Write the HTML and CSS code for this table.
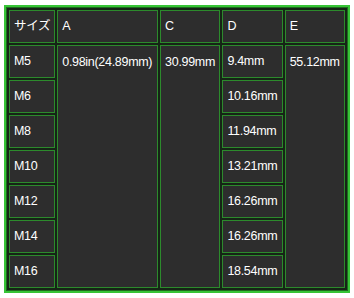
FILE: index.html
```html
<!DOCTYPE html>
<html lang="ja">
<head>
<meta charset="utf-8">
<title>サイズ表</title>
<link rel="stylesheet" href="styles.css">
</head>
<body>
<table class="spec">
  <tr>
    <td class="c1">サイズ</td>
    <td class="c2">A</td>
    <td class="c3">C</td>
    <td class="c4">D</td>
    <td class="c5">E</td>
  </tr>
  <tr>
    <td>M5</td>
    <td class="span" rowspan="7">0.98in(24.89mm)</td>
    <td class="span" rowspan="7">30.99mm</td>
    <td>9.4mm</td>
    <td class="span" rowspan="7">55.12mm</td>
  </tr>
  <tr><td>M6</td><td>10.16mm</td></tr>
  <tr><td>M8</td><td>11.94mm</td></tr>
  <tr><td>M10</td><td>13.21mm</td></tr>
  <tr><td>M12</td><td>16.26mm</td></tr>
  <tr><td>M14</td><td>16.26mm</td></tr>
  <tr><td>M16</td><td>18.54mm</td></tr>
</table>
</body>
</html>
```
FILE: styles.css
```css
html, body {
  background: #ffffff;
}
body {
  margin: 5px 4px 0;
  font-family: "Liberation Sans", "Noto Sans CJK JP", sans-serif;
}
.spec {
  border-collapse: separate;
  border-spacing: 2px;
  table-layout: fixed;
  border: 2px solid #36c436;
  box-shadow: inset 0 0 0 1px #1f6a1f;
  padding: 1px;
  background: #162416;
}
.spec td {
  box-sizing: border-box;
  height: 33px;
  padding: 0 4px;
  border: 1px solid #2c8a2c;
  background: #2d2d2d;
  color: #ffffff;
  font-size: 12.5px;
  line-height: 15px;
  letter-spacing: -0.3px;
  white-space: nowrap;
  vertical-align: middle;
}
.spec td.span {
  vertical-align: top;
  padding-top: 9px;
}
.spec td.c1 { width: 43px; }
.spec td.c2 { width: 103px; }
.spec td.c3 { width: 61px; }
.spec td.c4 { width: 61px; }
.spec td.c5 { width: 61px; }
```
